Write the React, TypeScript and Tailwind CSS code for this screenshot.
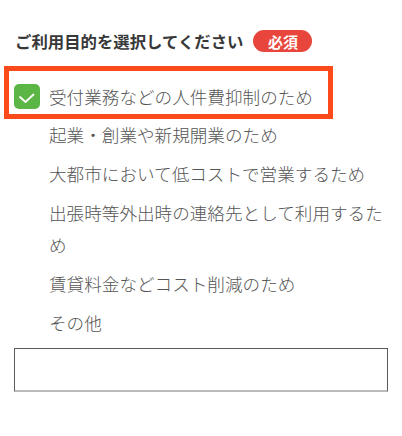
import React from "react";

const options = [
  "起業・創業や新規開業のため",
  "大都市において低コストで営業するため",
  "出張時等外出時の連絡先として利用するため",
  "賃貸料金などコスト削減のため",
  "その他",
];

export default function App() {
  return (
    <div
      className="w-[402px] h-[436px] bg-white overflow-hidden"
      style={{ fontFamily: '"Noto Sans CJK JP", "Noto Sans", sans-serif' }}
    >
      <div className="pt-[29px] pl-[15px] flex items-center h-[53px]">
        <span className="text-[16.4px] leading-[24px] font-bold text-[#383838]">
          ご利用目的を選択してください
        </span>
        <span className="ml-[10px] w-[59px] h-[22px] rounded-full bg-[#e8453c] text-white text-[15px] font-bold flex items-center justify-center leading-none">
          必須
        </span>
      </div>

      <div className="mt-[13px] ml-[4px] w-[329px] h-[53px] border-[5px] border-[#fc4a1a] pl-[5px] pt-[13px] flex items-start">
        <div className="w-[26px] h-[25px] rounded-[5px] bg-[#5cb646] shrink-0">
          <svg width="26" height="25" viewBox="0 0 26 25">
            <path d="M6 13 L11.5 18 L19.5 10.5" fill="none" stroke="white" strokeWidth="1.8" strokeLinecap="round" strokeLinejoin="round" />
          </svg>
        </div>
        <span className="ml-[9px] -mt-[3px] text-[17.6px] leading-[32px] font-light text-[#555]">
          受付業務などの人件費抑制のため
        </span>
      </div>

      <div className="flex flex-col gap-[7px] pl-[49px] pr-[15px]">
        {options.map((o) => (
          <div key={o} className="text-[17.6px] leading-[32px] font-light text-[#555]">
            {o}
          </div>
        ))}
      </div>

      <div className="mt-[9px] ml-[14px] w-[374px] h-[44px] border border-[#5a5a5a] border-b-2 border-b-[#bbb]" />
    </div>
  );
}
